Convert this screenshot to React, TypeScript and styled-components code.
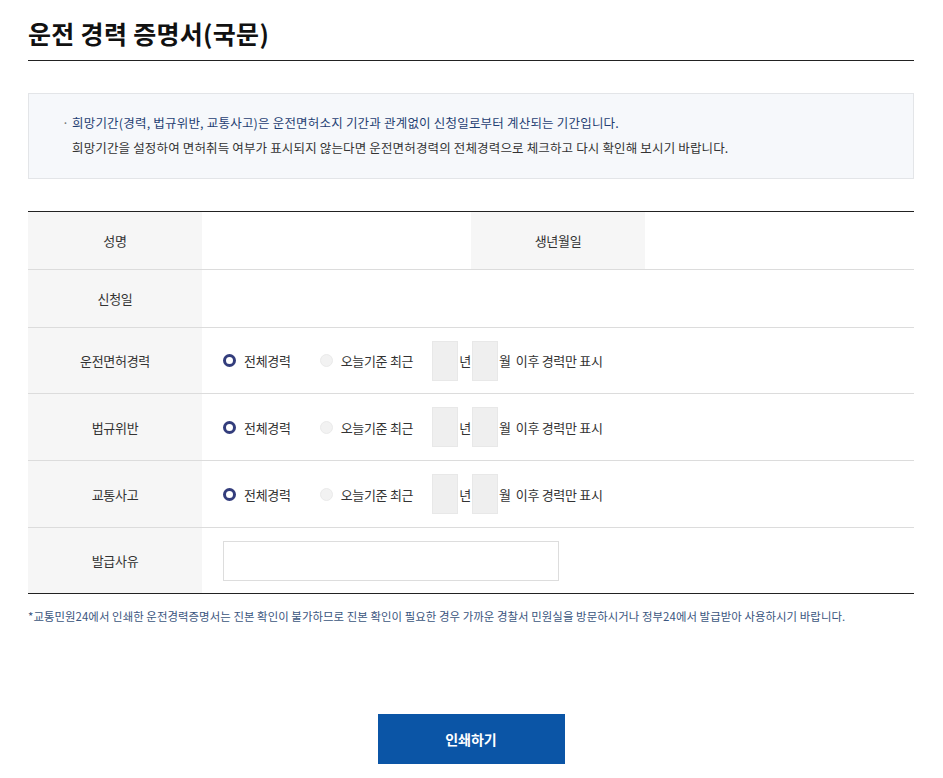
import React from "react";
import styled, { createGlobalStyle } from "styled-components";

const Global = createGlobalStyle`
  html, body { margin: 0; padding: 0; background: #fff; }
  body { font-family: "Noto Sans CJK KR", "Noto Sans", sans-serif; color: #333; }
  * { box-sizing: border-box; }
`;

const Page = styled.div`
  width: 886px;
  margin-left: 28px;
  padding-top: 14px;
  padding-bottom: 14px;
`;

const Title = styled.h1`
  margin: 0;
  font-size: 25px;
  font-weight: 700;
  color: #111;
  letter-spacing: 0.3px;
  line-height: 38px;
  padding-bottom: 8px;
  border-bottom: 1px solid #222;
`;

const InfoBox = styled.div`
  margin-top: 32px;
  height: 86px;
  background: #f6f8fb;
  border: 1px solid #e3e5e8;
  padding: 16px 0 0 33px;
  font-size: 12.5px;
  line-height: 25px;
  letter-spacing: 0.2px;
`;

const InfoLine = styled.p<{ $accent?: boolean }>`
  margin: 0;
  color: ${(p) => (p.$accent ? "#1f3f73" : "#333")};
  padding-left: ${(p) => (p.$accent ? "0" : "10px")};
  letter-spacing: ${(p) => (p.$accent ? "0.2px" : "0.15px")};
`;

const Bullet = styled.span`
  display: inline-block;
  width: 10px;
  color: #777;
`;

const Table = styled.div`
  margin-top: 32px;
  border-top: 1px solid #222;
  border-bottom: 1px solid #222;
`;

const Row = styled.div<{ $h: number; $last?: boolean }>`
  display: grid;
  grid-template-columns: 174px 269px 174px 1fr;
  height: ${(p) => p.$h}px;
  border-bottom: ${(p) => (p.$last ? "none" : "1px solid #dcdcdc")};
`;

const HeadCell = styled.div`
  background: #f6f6f6;
  display: flex;
  align-items: center;
  justify-content: center;
  font-size: 13px;
  color: #333;
  letter-spacing: -0.3px;
`;

const ValueCell = styled.div<{ $span?: number }>`
  grid-column: span ${(p) => p.$span ?? 1};
  display: flex;
  align-items: center;
  padding-left: 21px;
  font-size: 13px;
  color: #333;
  letter-spacing: -0.3px;
`;

const RadioLabel = styled.label<{ $gap: number }>`
  display: flex;
  align-items: center;
  gap: 8px;
  margin-right: ${(p) => p.$gap}px;
`;

const RadioDot = styled.span<{ $on?: boolean }>`
  width: 13px;
  height: 13px;
  border-radius: 50%;
  border: ${(p) => (p.$on ? "3px solid #333d7c" : "1px solid #eaeaea")};
  background: ${(p) => (p.$on ? "#fff" : "#f2f2f2")};
  margin-left: ${(p) => (p.$on ? "0" : "2px")};
`;

const SmallBox = styled.span`
  width: 26px;
  height: 40px;
  background: #efefef;
  border: 1px solid #e8e8e8;
`;

const Unit = styled.span`
  margin: 0 1px;
`;

const TextInput = styled.div`
  width: 336px;
  height: 40px;
  border: 1px solid #dddddd;
  background: #fff;
`;

const Note = styled.p`
  margin: 14px 0 0;
  font-size: 11.4px;
  color: #3b5680;
  letter-spacing: 0.07px;
`;

const ButtonRow = styled.div`
  display: flex;
  justify-content: center;
  margin-top: 90px;
`;

const PrintButton = styled.button`
  width: 187px;
  height: 50px;
  border: none;
  background: #0b55a6;
  color: #fff;
  font-family: inherit;
  font-size: 14px;
  font-weight: 700;
  cursor: pointer;
`;

const PeriodRow = () => (
  <ValueCell $span={3}>
    <RadioLabel $gap={27}>
      <RadioDot $on />
      전체경력
    </RadioLabel>
    <RadioLabel $gap={19}>
      <RadioDot />
      오늘기준 최근
    </RadioLabel>
    <SmallBox />
    <Unit>년</Unit>
    <SmallBox />
    <Unit>월&nbsp; 이후 경력만 표시</Unit>
  </ValueCell>
);

export default function App() {
  return (
    <>
      <Global />
      <Page>
        <Title>운전 경력 증명서(국문)</Title>
        <InfoBox>
          <InfoLine $accent>
            <Bullet>·</Bullet>희망기간(경력, 법규위반, 교통사고)은 운전면허소지 기간과 관계없이 신청일로부터 계산되는 기간입니다.
          </InfoLine>
          <InfoLine>
            희망기간을 설정하여 면허취득 여부가 표시되지 않는다면 운전면허경력의 전체경력으로 체크하고 다시 확인해 보시기 바랍니다.
          </InfoLine>
        </InfoBox>
        <Table>
          <Row $h={58}>
            <HeadCell>성명</HeadCell>
            <ValueCell />
            <HeadCell>생년월일</HeadCell>
            <ValueCell />
          </Row>
          <Row $h={58}>
            <HeadCell>신청일</HeadCell>
            <ValueCell $span={3} />
          </Row>
          <Row $h={66}>
            <HeadCell>운전면허경력</HeadCell>
            <PeriodRow />
          </Row>
          <Row $h={67}>
            <HeadCell>법규위반</HeadCell>
            <PeriodRow />
          </Row>
          <Row $h={67}>
            <HeadCell>교통사고</HeadCell>
            <PeriodRow />
          </Row>
          <Row $h={65} $last>
            <HeadCell>발급사유</HeadCell>
            <ValueCell $span={3}>
              <TextInput />
            </ValueCell>
          </Row>
        </Table>
        <Note>*교통민원24에서 인쇄한 운전경력증명서는 진본 확인이 불가하므로 진본 확인이 필요한 경우 가까운 경찰서 민원실을 방문하시거나 정부24에서 발급받아 사용하시기 바랍니다.</Note>
        <ButtonRow>
          <PrintButton>인쇄하기</PrintButton>
        </ButtonRow>
      </Page>
    </>
  );
}
